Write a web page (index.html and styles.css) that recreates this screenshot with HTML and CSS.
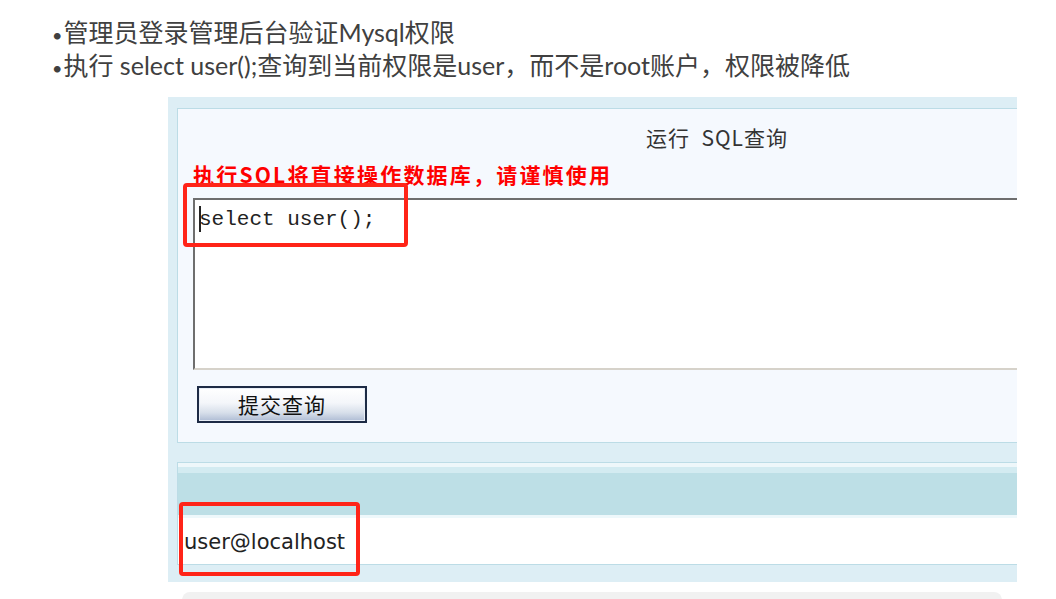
FILE: index.html
```html
<!DOCTYPE html>
<html lang="zh-CN">
<head>
<meta charset="utf-8">
<title>SQL 查询</title>
<link rel="stylesheet" href="styles.css">
</head>
<body>
  <div class="notes">
    <p><span class="dot">•</span>管理员登录管理后台验证Mysql权限</p>
    <p><span class="dot">•</span>执行 select user();查询到当前权限是user，而不是root账户，权限被降低</p>
  </div>
  <div class="shot">
    <div class="panel query">
      <div class="title">运行&nbsp; SQL查询</div>
      <div class="warn">执行SQL将直接操作数据库，请谨慎使用</div>
      <div class="editor"><span class="caret"></span>select user();</div>
      <div class="btn-row"><button class="submit" type="button">提交查询</button></div>
    </div>
    <div class="panel result">
      <div class="result-head"></div>
      <div class="result-row">user@localhost</div>
    </div>
    <div class="mark mark-sql"></div>
    <div class="mark mark-user"></div>
  </div>
  <div class="next-card"></div>
</body>
</html>
```
FILE: styles.css
```css
html, body {
  margin: 0;
  padding: 0;
  background: #ffffff;
  overflow: hidden;
}

body {
  width: 1056px;
  height: 599px;
}

.notes {
  padding: 16px 0 0 52px;
  font-family: Lato, "Noto Sans CJK SC", sans-serif;
  font-size: 25px;
  line-height: 33px;
  color: #404040;
}

.notes p {
  margin: 0;
  height: 33px;
  white-space: nowrap;
}

.dot {
  font-size: 18px;
  line-height: 0;
  margin-right: 1px;
}

.shot {
  position: relative;
  margin: 15px 0 0 168px;
  width: 849px;
  padding: 11px 0 17px 9px;
  box-sizing: border-box;
  background: #ddeef5;
  overflow: hidden;
}

.panel {
  width: 1000px;
  border: 1px solid #bcdce6;
  box-sizing: border-box;
}

.query {
  background: #f5f9fe;
  padding: 14px 0 19px 15px;
}

.title {
  padding-left: 453px;
  height: 28px;
  line-height: 28px;
  font-family: "Noto Sans CJK SC", sans-serif;
  font-size: 21px;
  letter-spacing: 1px;
  color: #333333;
}

.warn {
  margin-top: 11px;
  height: 24px;
  line-height: 24px;
  font-family: "Noto Sans CJK SC", sans-serif;
  font-size: 21px;
  font-weight: 700;
  letter-spacing: 2.2px;
  color: #ff0000;
  white-space: nowrap;
}

.editor {
  margin-top: 12px;
  height: 172px;
  box-sizing: border-box;
  background: #ffffff;
  border-top: 2px solid #6e6e6e;
  border-left: 2px solid #6e6e6e;
  border-bottom: 2px solid #d6d2ca;
  padding: 5px 0 0 4px;
  font-family: "Liberation Mono", monospace;
  font-size: 21px;
  line-height: 30px;
  color: #222222;
  white-space: pre;
}

.caret {
  display: inline-block;
  width: 0;
  height: 26px;
  border-left: 2px solid #222222;
  margin-right: -2px;
  vertical-align: -7px;
}

.btn-row {
  margin-top: 16px;
  padding-left: 4px;
}

.submit {
  display: block;
  width: 170px;
  height: 37px;
  margin: 0;
  padding: 0;
  border: 2px solid #1d2b45;
  background: linear-gradient(#ffffff 0%, #f4f6fa 45%, #d7dfea 75%, #aebcd4 100%);
  font-family: "Noto Sans CJK SC", sans-serif;
  font-size: 21px;
  line-height: 31px;
  letter-spacing: 1px;
  color: #111111;
  box-shadow: inset 0 0 0 1px #e8eef6;
}

.result {
  margin-top: 19px;
  background: #ffffff;
}

.result-head {
  height: 52px;
  background: linear-gradient(#eef7fa 0, #eef7fa 4px, #d3ebf1 4px, #d3ebf1 10px, #bddfe6 10px, #bddfe6 100%);
}

.result-row {
  height: 49px;
  box-sizing: border-box;
  border-top: 3px solid #eef8fb;
  padding: 9px 0 0 6px;
  font-family: "DejaVu Sans", sans-serif;
  font-size: 21px;
  line-height: 30px;
  color: #222222;
}

.mark {
  position: absolute;
  border: 4px solid #ff2418;
  border-radius: 4px;
  box-sizing: border-box;
}

.mark-sql {
  left: 15px;
  top: 86px;
  width: 225px;
  height: 64px;
}

.mark-user {
  left: 11px;
  top: 405px;
  width: 181px;
  height: 74px;
}

.next-card {
  margin: 10px 0 0 182px;
  width: 820px;
  height: 30px;
  background: #f1f1f1;
  border-radius: 8px;
}
```
